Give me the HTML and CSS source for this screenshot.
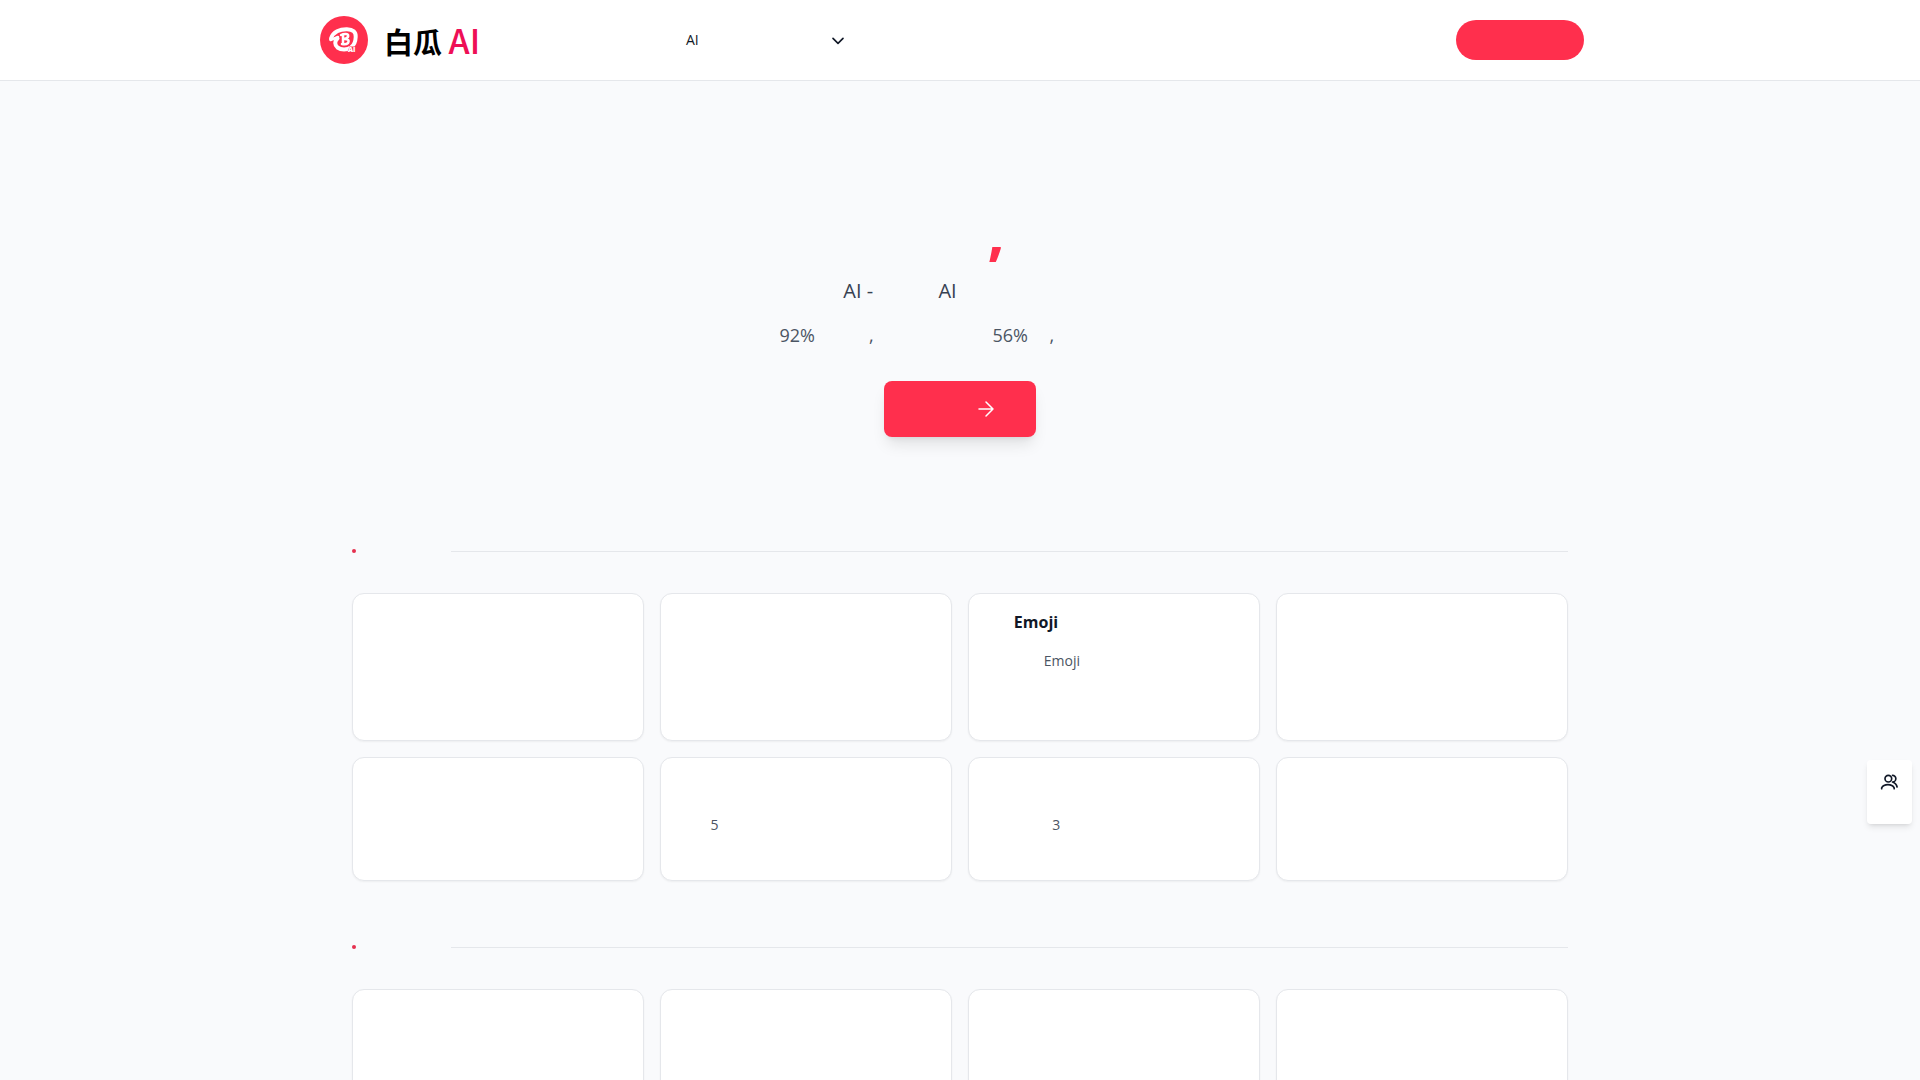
FILE: index.html
```html
<!DOCTYPE html>
<html lang="zh-CN">
<head>
    <meta charset="UTF-8">
    <meta name="viewport" content="width=device-width, initial-scale=1.0">
    <title>白瓜 AI</title>
    <link rel="stylesheet" href="styles.css">
</head>
<body>
    <header class="header">
        <div class="header-inner">
            <a class="logo" href="#">
                <svg class="logo-mark" viewBox="0 0 48 48" aria-hidden="true">
                    <circle cx="24" cy="24" r="24" fill="#ff2f4d"/>
                    <g fill="none" stroke="#fff" stroke-linecap="round" stroke-linejoin="round">
                        <path d="M11 22.5C13 16 20 13 27 13.2C33 13.5 36 16 35.7 21C35.5 26 34.5 29 31 31.5C27 34 21 34 17.5 31.5C14.5 29 14.5 25 17.5 22.5" stroke-width="4"/>
                        <path d="M10.5 24L18 21" stroke-width="2.5"/>
                        <path d="M21 19C24 17.500 28.500 17.500 28.200 20C28 22 26 22.800 24 23C28 22.800 29.500 24.500 28 27C26.500 28.500 24 28.500 22 28M23 19V28" stroke-width="2.5"/>
                    </g>
                    <path d="M27 37L29.5 30.5H38V37Z" fill="#ff2f4d"/>
                    <text class="logo-mark-text" x="28" y="36">AI</text>
                </svg>
                <span class="logo-name">白瓜 <span class="logo-ai">AI</span></span>
            </a>
            <nav class="nav">
                <a class="nav-link" href="#">AI</a>
                <button class="nav-toggle" type="button" aria-label="更多工具">
                    <svg class="icon-sm" viewBox="0 0 24 24" aria-hidden="true"><path d="m6 10 6 6 6-6"/></svg>
                </button>
            </nav>
            <button class="login" type="button" aria-label="登录"></button>
        </div>
    </header>

    <main class="main">
        <section class="hero">
            <h1 class="hero-title"><span class="g6"></span>,<span class="g4"></span></h1>
            <p class="hero-subtitle"><span class="g2"></span> AI - <span class="g5"></span>AI <span class="g12"></span></p>
            <p class="hero-text"><span class="g2"></span>92%<span class="g5"></span>,<span class="g11"></span>56%<span class="g2"></span>,<span class="g10"></span></p>
            <button class="start" type="button" aria-label="立即开始">
                <svg class="icon-md" viewBox="0 0 24 24" aria-hidden="true"><path d="M5 12h14M12 5l7 7-7 7"/></svg>
            </button>
        </section>

        <section class="group">
            <div class="group-head"><span class="dot"></span><span class="rule"></span></div>
            <div class="cards">
                <article class="card tall"></article>
                <article class="card tall"></article>
                <article class="card tall">
                    <h2 class="card-title"><span class="g3"></span>Emoji</h2>
                    <p class="card-text"><span class="g7"></span>Emoji</p>
                </article>
                <article class="card tall"></article>
                <article class="card"></article>
                <article class="card">
                    <h2 class="card-title"></h2>
                    <p class="card-text"><span class="g4"></span>5</p>
                </article>
                <article class="card">
                    <h2 class="card-title"></h2>
                    <p class="card-text"><span class="g8"></span>3</p>
                </article>
                <article class="card"></article>
            </div>
        </section>

        <section class="group">
            <div class="group-head"><span class="dot"></span><span class="rule"></span></div>
            <div class="cards">
                <article class="card tall"></article>
                <article class="card tall"></article>
                <article class="card tall"></article>
                <article class="card tall"></article>
            </div>
        </section>
    </main>

    <button class="contact" type="button" aria-label="交流群">
        <svg class="icon-sm" viewBox="0 0 24 24" aria-hidden="true">
            <circle cx="10" cy="8" r="4"/>
            <path d="M2 20v-1a8 6 0 0 1 15 0v1M15 4a4 4 0 0 1 0 8c3 1 5 3 5.5 6"/>
        </svg>
    </button>
</body>
</html>
```
FILE: styles.css
```css
* {
    box-sizing: border-box;
    margin: 0;
    padding: 0;
}
body {
    font-family: "Open Sans", "Noto Sans CJK SC", sans-serif;
    background: #f9fafc;
    color: #111827;
}
button {
    border: none;
    background: none;
    color: inherit;
    font: inherit;
    cursor: pointer;
}
a {
    color: inherit;
    text-decoration: none;
}
svg {
    display: block;
    flex: none;
    fill: none;
    stroke-linecap: round;
    stroke-linejoin: round;
}

/* header */
.header {
    background: #fff;
    border-bottom: 1px solid #e5e7eb;
}
.header-inner {
    display: flex;
    align-items: center;
    max-width: 1280px;
    height: 80px;
    margin: 0 auto;
    padding-right: 16px;
}
.logo {
    display: flex;
    align-items: center;
    gap: 16px;
    width: 366px;
}
.logo-mark {
    width: 48px;
    height: 48px;
}
.logo-mark-text {
    font-size: 7px;
    font-weight: 800;
    fill: #fff;
}
.logo-name {
    font-family: "Noto Sans CJK SC", sans-serif;
    font-size: 29px;
    font-weight: 700;
    line-height: 40px;
    color: #000;
    white-space: nowrap;
}
.logo-ai {
    font-size: 34px;
    font-weight: 500;
    line-height: 40px;
    color: #ee0f56;
}
.nav {
    display: flex;
    align-items: center;
    justify-content: space-between;
    width: 162px;
    font-size: 14px;
    line-height: 20px;
}
.icon-sm {
    width: 20px;
    height: 20px;
    stroke: #111827;
    stroke-width: 2;
}
.login {
    width: 128px;
    height: 40px;
    margin-left: auto;
    border-radius: 20px;
    background: #ff2f4d;
}

/* hero */
.main {
    max-width: 1280px;
    margin: 0 auto;
    padding: 0 32px;
}
.hero {
    display: flex;
    flex-direction: column;
    align-items: center;
    gap: 16px;
    padding: 120px 0 100px;
    white-space: nowrap;
}
.hero-title {
    font-size: 60px;
    font-weight: 700;
    line-height: 60px;
    color: #ff2f4d;
}
.hero-subtitle {
    font-size: 20px;
    line-height: 28px;
    color: #374151;
}
.hero-text {
    font-size: 18px;
    line-height: 28px;
    color: #4b5563;
}
.start {
    display: flex;
    align-items: center;
    justify-content: flex-end;
    width: 152px;
    height: 56px;
    margin-top: 16px;
    padding-right: 38px;
    border-radius: 8px;
    background: #ff2f4d;
    box-shadow: 0 10px 15px -3px rgba(0, 0, 0, 0.1), 0 4px 6px -4px rgba(0, 0, 0, 0.1);
}
.icon-md {
    width: 24px;
    height: 24px;
    stroke: #fff;
    stroke-width: 1.5;
}

/* tool groups */
.group {
    margin-bottom: 52px;
}
.group-head {
    display: flex;
    align-items: center;
    justify-content: space-between;
    height: 28px;
    margin-bottom: 28px;
}
.dot {
    width: 4px;
    height: 4px;
    border-radius: 50%;
    background: #e5304f;
}
.rule {
    width: calc(100% - 99px);
    height: 1px;
    background: #e5e7eb;
}
.cards {
    display: grid;
    grid-template-columns: repeat(4, 1fr);
    gap: 16px;
}
.card {
    min-height: 124px;
    padding: 16px;
    border: 1px solid #e5e7eb;
    border-radius: 12px;
    background: #fff;
    box-shadow: 0 1px 2px rgba(0, 0, 0, 0.05);
}
.tall {
    min-height: 148px;
}
.card-title {
    height: 24px;
    margin-bottom: 15px;
    font-size: 16px;
    line-height: 24px;
}
.card-text {
    font-size: 14px;
    line-height: 24px;
    color: #4b5563;
}

/* blank runs, 0.6em for each character */
.g2, .g3, .g4, .g5, .g6, .g7, .g8, .g10, .g11, .g12 {
    display: inline-block;
}
.g2 { width: 1.2em; }
.g3 { width: 1.8em; }
.g4 { width: 2.4em; }
.g5 { width: 3em; }
.g6 { width: 3.6em; }
.g7 { width: 4.2em; }
.g8 { width: 4.8em; }
.g10 { width: 6em; }
.g11 { width: 6.6em; }
.g12 { width: 7.2em; }

/* floating button */
.contact {
    position: fixed;
    top: 760px;
    right: 8px;
    display: flex;
    justify-content: center;
    width: 45px;
    height: 64px;
    padding-top: 12px;
    border-radius: 4px;
    background: #fff;
    box-shadow: 0 4px 6px -1px rgba(0, 0, 0, 0.1), 0 2px 4px -2px rgba(0, 0, 0, 0.1);
}
```
